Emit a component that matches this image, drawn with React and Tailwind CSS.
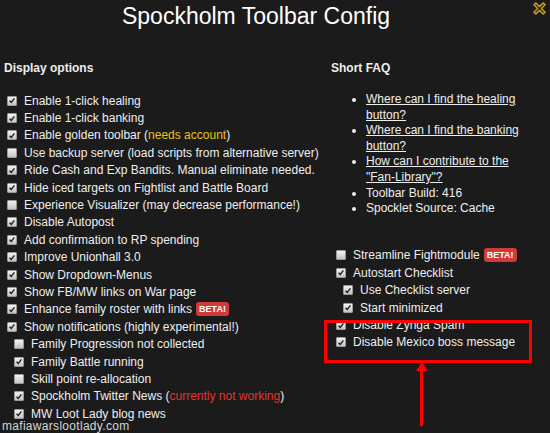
import React from "react";

const Box = ({ checked }) => (
  <span className="inline-flex h-[10px] w-[10px] shrink-0 items-center justify-center rounded-[1px] bg-gradient-to-b from-[#f2f2f2] to-[#c4c4c4] border border-[#9a9a9a]">
    {checked && (
      <svg viewBox="0 0 10 10" className="h-[9px] w-[9px]">
        <path d="M2 5.2 L4.1 7.4 L8 2.4" fill="none" stroke="#222" strokeWidth="1.8" />
      </svg>
    )}
  </span>
);

const Beta = () => (
  <span className="ml-[4px] inline-flex h-[14px] items-center rounded-[3px] bg-[#d23a3a] px-[3px] text-[9px] font-bold leading-none text-white">
    BETA!
  </span>
);

const Row = ({ checked, sub, children }) => (
  <div className={`flex h-[17.4px] items-center gap-[7px] whitespace-nowrap ${sub ? "pl-[7px]" : ""}`}>
    <Box checked={checked} />
    <span className="flex items-center">{children}</span>
  </div>
);

const leftRows = [
  { c: true, t: "Enable 1-click healing" },
  { c: true, t: "Enable 1-click banking" },
  {
    c: true,
    t: (
      <>
        Enable golden toolbar (<span className="text-[#e8c21a]">needs account</span>)
      </>
    ),
  },
  { c: false, t: "Use backup server (load scripts from alternative server)" },
  { c: true, t: "Ride Cash and Exp Bandits. Manual eliminate needed." },
  { c: true, t: "Hide iced targets on Fightlist and Battle Board" },
  { c: false, t: "Experience Visualizer (may decrease performance!)" },
  { c: true, t: "Disable Autopost" },
  { c: true, t: "Add confirmation to RP spending" },
  { c: true, t: "Improve Unionhall 3.0" },
  { c: true, t: "Show Dropdown-Menus" },
  { c: true, t: "Show FB/MW links on War page" },
  {
    c: true,
    t: (
      <>
        Enhance family roster with links <Beta />
      </>
    ),
  },
  { c: true, t: "Show notifications (highly experimental!)" },
  { c: false, sub: true, t: "Family Progression not collected" },
  { c: true, sub: true, t: "Family Battle running" },
  { c: false, sub: true, t: "Skill point re-allocation" },
  {
    c: true,
    sub: true,
    t: (
      <>
        Spockholm Twitter News (<span className="text-[#e8322e]">currently not working</span>)
      </>
    ),
  },
  { c: true, sub: true, t: "MW Loot Lady blog news" },
];

const rightRows = [
  {
    c: false,
    t: (
      <>
        Streamline Fightmodule <Beta />
      </>
    ),
  },
  { c: true, t: "Autostart Checklist" },
  { c: true, sub: true, t: "Use Checklist server" },
  { c: true, sub: true, t: "Start minimized" },
  { c: true, t: "Disable Zynga Spam" },
  { c: true, t: "Disable Mexico boss message" },
];

export default function App() {
  return (
    <div className="relative h-[433px] w-[550px] overflow-hidden bg-[#1b1b1b] font-['Liberation_Sans',sans-serif] text-[12px] text-[#eeeeee]">
      <h1 className="pr-[38px] pt-[1px] text-center text-[23px] leading-[30px] text-white">Spockholm Toolbar Config</h1>

      {/* close button */}
      <svg viewBox="0 0 14 14" className="absolute right-[4px] top-[2px] h-[13px] w-[13px]">
        <path
          d="M1 3 L3 1 L7 5 L11 1 L13 3 L9 7 L13 11 L11 13 L7 9 L3 13 L1 11 L5 7 Z"
          fill="#1b1b1b"
          stroke="#c9a21c"
          strokeWidth="1.6"
          strokeLinejoin="round"
        />
      </svg>

      <div className="mt-[30px] grid grid-cols-[327px_1fr]">
        <div className="pl-[7px]">
          <h2 className="-ml-[3px] text-[12px] font-bold leading-[14px]">Display options</h2>
          <div className="mt-[17px]">
            {leftRows.map((r, i) => (
              <Row key={i} checked={r.c} sub={r.sub}>
                {r.t}
              </Row>
            ))}
          </div>
        </div>

        <div>
          <h2 className="pl-[4px] text-[12px] font-bold leading-[14px]">Short FAQ</h2>
          <ul className="ml-[39px] mt-[17px] w-[170px] list-disc pl-[0px] leading-[15.6px]">
            <li className="underline">Where can I find the healing button?</li>
            <li className="underline">Where can I find the banking button?</li>
            <li className="underline">How can I contribute to the "Fan-Library"?</li>
            <li>Toolbar Build: 416</li>
            <li>Spocklet Source: Cache</li>
          </ul>
          <div className="mt-[30px] pl-[9px]">
            {rightRows.map((r, i) => (
              <Row key={i} checked={r.c} sub={r.sub}>
                {r.t}
              </Row>
            ))}
          </div>
        </div>
      </div>

      {/* annotation */}
      <div className="absolute left-[324px] top-[320px] h-[43px] w-[208px] border-[3px] border-[#ff0000]" />
      <div className="absolute left-[416px] top-[362px] h-0 w-0 border-x-[6px] border-b-[9px] border-x-transparent border-b-[#ff0000]" />
      <div className="absolute left-[420px] top-[370px] h-[56px] w-[3px] bg-[#ff0000]" />

      <div className="absolute bottom-0 left-[2px] text-[12px] leading-[13px] tracking-[0.3px] text-[#d6d6d6]">
        mafiawarslootlady.com
      </div>
    </div>
  );
}
